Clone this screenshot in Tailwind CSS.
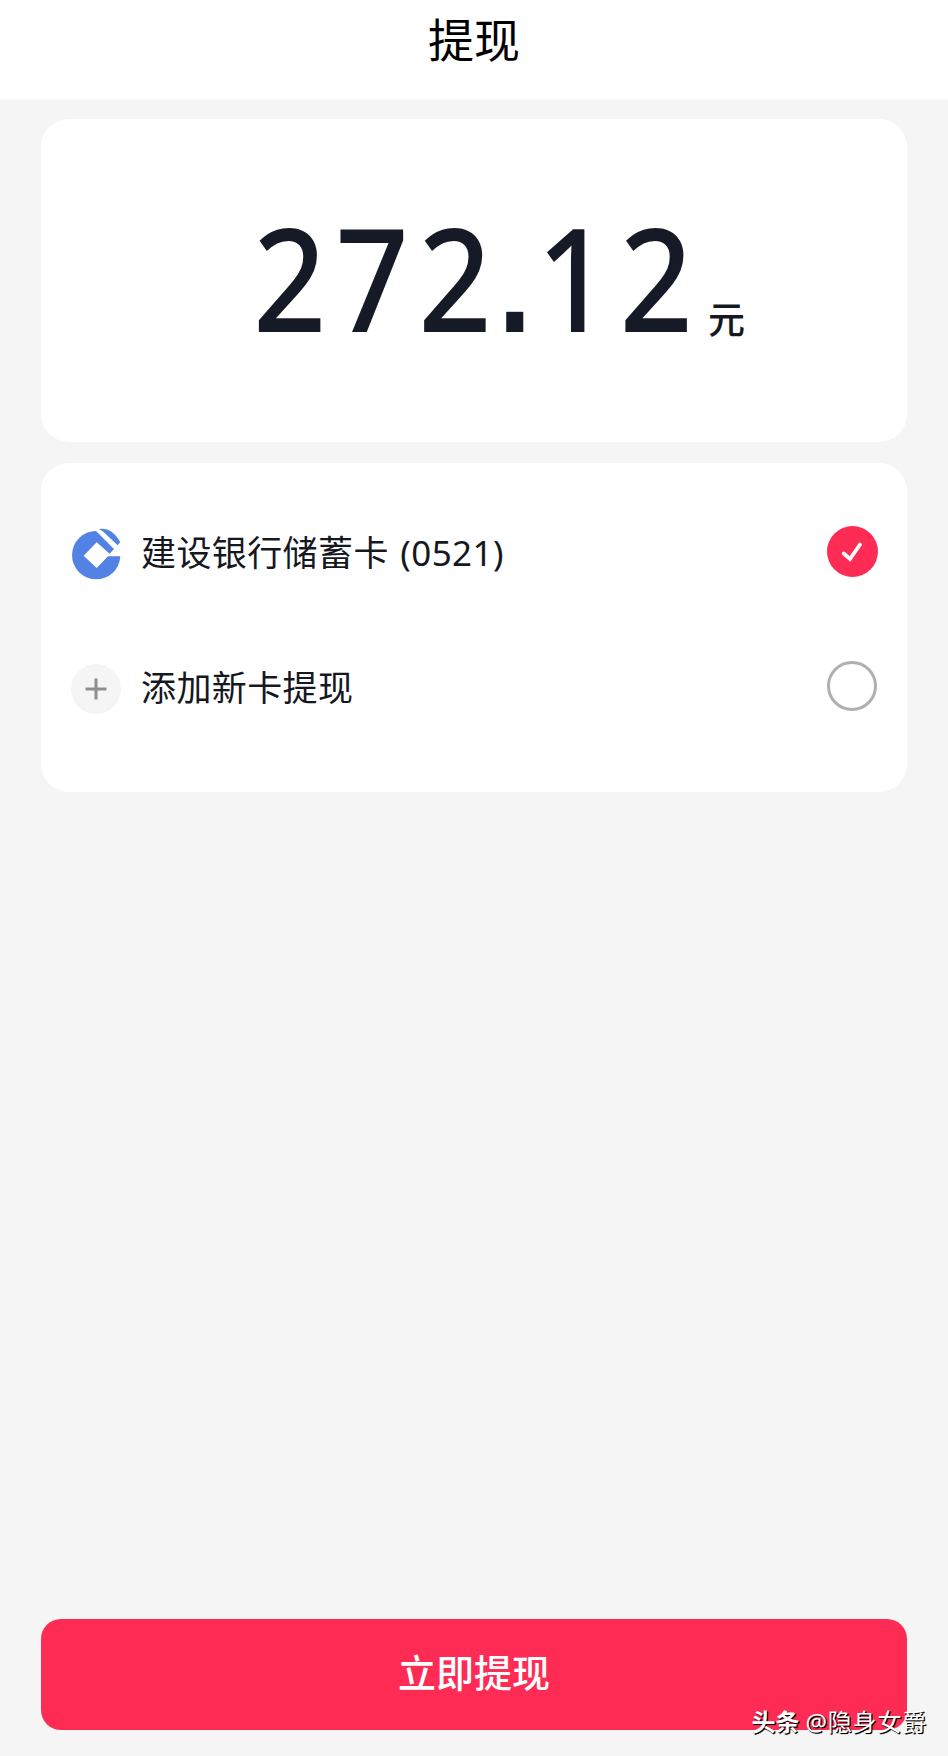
<!DOCTYPE html>
<html lang="zh-CN">
<head>
  <meta charset="UTF-8">
  <meta name="viewport" content="width=device-width, initial-scale=1.0">
  <title>提现</title>
  <script src="https://cdn.jsdelivr.net/npm/@tailwindcss/browser@4"></script>
</head>
<body class="relative h-[1756px] overflow-hidden bg-[#f5f5f5] flex flex-col font-['Noto_Sans','Noto_Sans_CJK_SC',sans-serif] text-[#16181f]">

  <!-- Header -->
  <header class="h-[98.5px] shrink-0 bg-white text-center">
    <h1 class="text-[46px] leading-[78px] text-black">提现</h1>
  </header>

  <main class="flex-1 flex flex-col px-[41px] pt-[20.5px] pb-[26px]">
    <!-- Amount -->
    <section class="h-[323px] bg-white rounded-[28px] flex items-baseline pt-[59px] pl-[212px]">
      <span class="w-[455px] shrink-0 whitespace-nowrap origin-left scale-x-[0.89] text-[144px] leading-[196px] font-medium tracking-[10.4px] text-[#161a27]">272<span class="font-['Liberation_Sans',sans-serif] font-bold text-[136px] leading-none -ml-[3px] -mr-[4.6px]">.</span>12</span>
      <span class="text-[37px] font-medium leading-9 translate-y-0.5">元</span>
    </section>

    <!-- Cards -->
    <section class="mt-[21px] h-[329px] bg-white rounded-[28px] pl-[30px] pr-[29px] pt-[23px]">
      <label class="h-[135px] flex items-center">
        <svg class="w-[50px] h-[52px] shrink-0" viewBox="0 0 150 156" fill="#5282e4">
          <path d="M148 85A72.5 72.5 0 1 1 75 9L129 63L116 77L77 43L38 83L77 120L111 85Z"/>
          <path d="M84 3Q122 -4 148 42L140 52L97 11Q91 6 84 3Z"/>
        </svg>
        <span class="ml-[20px] text-[35px] tracking-[0.4px]">建设银行储蓄卡 <span class="ml-0.5">(0521)</span></span>
        <svg class="ml-auto w-[51px] h-[51px] shrink-0 -translate-y-0.5" viewBox="0 0 51 51" fill="none">
          <circle cx="25.5" cy="25.5" r="25.5" fill="#fe2c55"/>
          <path d="M16.7 27.5L23 33L33 18.5" stroke="#fff" stroke-width="3.8" stroke-linecap="round"/>
        </svg>
      </label>
      <label class="h-[135px] flex items-center">
        <svg class="w-[50px] h-[50px] shrink-0" viewBox="0 0 50 50">
          <circle cx="25" cy="25" r="25" fill="#f5f5f5"/>
          <path d="M14.5 25H35.5M25 14.5V35.5" stroke="#8f8f8f" stroke-width="3"/>
        </svg>
        <span class="ml-[20px] text-[35px] tracking-[0.4px]">添加新卡提现</span>
        <span class="ml-auto mr-px w-[50px] h-[50px] rounded-full border-[3px] border-[#b0b0b0] -translate-y-[3px]"></span>
      </label>
    </section>

    <button class="mt-auto h-[111px] bg-[#fe2c55] rounded-[20px] text-white text-[38px] font-medium pb-[5px]">立即提现</button>
  </main>

  <!-- Watermark -->
  <div class="absolute right-[21px] bottom-[16px] flex items-center gap-1.5 text-white text-[24px] leading-9 whitespace-nowrap [text-shadow:1px_1px_1px_#000,1px_1px_0_#000]">
    <b>头条</b>
    <span class="tracking-[0.8px]">@隐身女爵</span>
  </div>

</body>
</html>
